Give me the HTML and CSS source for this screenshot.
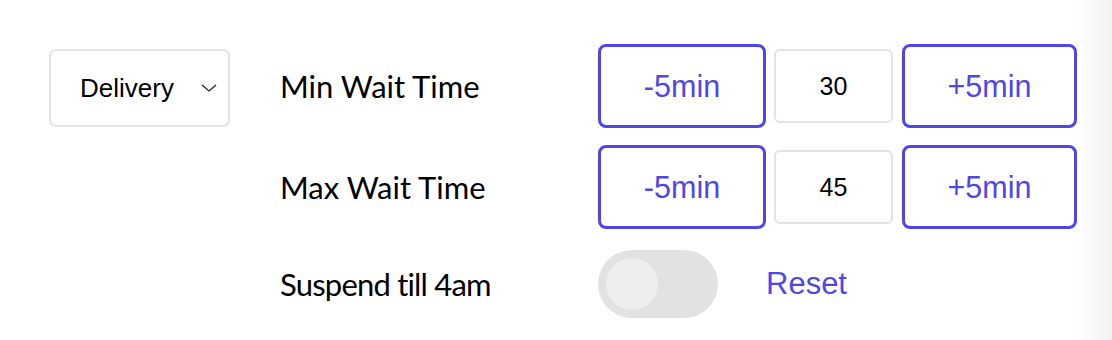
FILE: index.html
```html
<!DOCTYPE html>
<html>
<head>
<meta charset="utf-8">
<link rel="stylesheet" href="styles.css">
</head>
<body>
<div class="page">
  <div class="select">
    <span class="select-text">Delivery</span>
    <svg class="chevron" width="16" height="8" viewBox="0 0 16 8"><path d="M1 1 L8 7 L15 1" fill="none" stroke="#222" stroke-width="1.3"/></svg>
  </div>
  <div class="form">
    <div class="label">Min Wait Time</div>
    <div class="controls">
      <button class="step minus">-5min</button>
      <div class="value">30</div>
      <button class="step plus">+5min</button>
    </div>
    <div class="label">Max Wait Time</div>
    <div class="controls">
      <button class="step minus">-5min</button>
      <div class="value">45</div>
      <button class="step plus">+5min</button>
    </div>
    <div class="label label-tight">Suspend till 4am</div>
    <div class="controls">
      <div class="toggle"><div class="knob"></div></div>
      <span class="reset">Reset</span>
    </div>
  </div>
</div>
</body>
</html>
```

FILE: styles.css
```css
html {
  background: linear-gradient(to right, #ffffff 1076px, #f2f2f2 1112px);
  height: 100%;
}
body {
  margin: 0;
  font-family: "Liberation Sans", Arial, sans-serif;
  color: #000;
}
.page {
  display: flex;
  align-items: flex-start;
  padding: 44px 0 0 49px;
}
.select {
  margin-top: 5px;
  width: 181px;
  height: 78px;
  box-sizing: border-box;
  border: 2px solid #e3e3e3;
  border-radius: 7px;
  display: flex;
  align-items: center;
  justify-content: space-between;
  padding: 0 11px 0 29px;
}
.select-text {
  font-size: 26px;
}
.chevron {
  display: block;
}
.form {
  margin-left: 50px;
  display: grid;
  grid-template-columns: 318px auto;
  grid-template-rows: 84px 84px 76px;
  row-gap: 17px;
  align-items: center;
}
.label {
  font-family: "Lato", sans-serif;
  font-weight: 400;
  font-size: 31px;
  line-height: 1;
}
.label-tight {
  letter-spacing: -0.8px;
}
.controls {
  display: flex;
  align-items: center;
}
.step {
  box-sizing: border-box;
  height: 84px;
  border: 3px solid #4f46e5;
  border-radius: 8px;
  background: #fff;
  color: #4f46e5;
  font-family: "Liberation Sans", Arial, sans-serif;
  font-size: 30.5px;
  padding: 0;
}
.minus {
  width: 168px;
}
.plus {
  width: 175px;
}
.value {
  box-sizing: border-box;
  width: 119px;
  height: 74px;
  margin: 0 9px 0 8px;
  border: 2px solid #e3e3e3;
  border-radius: 6px;
  display: flex;
  align-items: center;
  justify-content: center;
  font-size: 25px;
}
.toggle {
  width: 120px;
  height: 68px;
  border-radius: 34px;
  background: #e2e2e2;
  box-sizing: border-box;
  padding: 8px;
}
.knob {
  width: 52px;
  height: 52px;
  border-radius: 50%;
  background: #eeeeee;
}
.reset {
  margin-left: 48px;
  color: #4f46e5;
  font-size: 31px;
}
```
